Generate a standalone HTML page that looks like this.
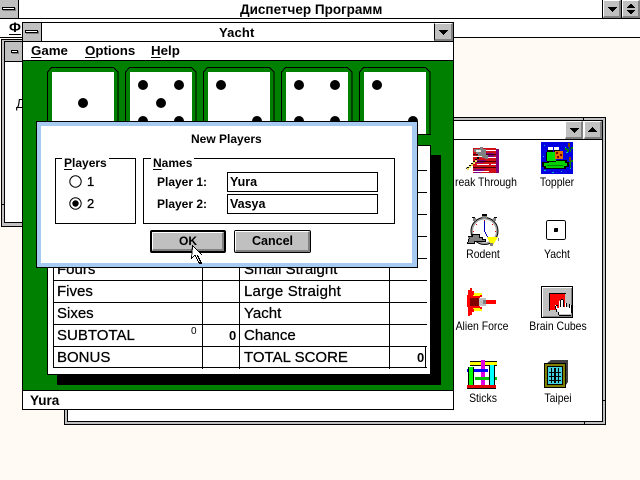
<!DOCTYPE html>
<html><head><meta charset="utf-8"><style>
html,body{margin:0;padding:0;width:640px;height:480px;overflow:hidden;background:#fffaf3}
body{position:relative;font-family:"Liberation Sans",sans-serif;color:#000}
div,span.t{position:absolute;box-sizing:border-box}
.t{white-space:nowrap;line-height:16px;height:16px;font-size:13px;font-weight:bold}
.r{font-weight:normal;font-size:15px;-webkit-text-stroke:.25px #000}
.l{font-weight:normal;font-size:12px;line-height:14px;height:14px;text-align:center;width:90px;transform:scaleX(.87)}
.k{background:#000}.w{background:#fff}
.b{background:#c0c0c0;border-top:1px solid #fff;border-left:1px solid #fff;border-right:2px solid #808080;border-bottom:2px solid #808080}
.sys{background:#c0c0c0}
.sys i{position:absolute;background:#fff;border:1px solid #000;box-sizing:border-box;height:3px;box-shadow:1px 1px 0 #808080}
svg{position:absolute;left:0;top:0}
u{text-underline-offset:2px;text-decoration-thickness:1px}
</style></head><body>

<!-- Program Manager -->
<div class="w" style="left:0;top:0;width:640px;height:38px"></div>
<div class="k" style="left:0;top:18px;width:640px;height:1px"></div>
<div class="k" style="left:0;top:37px;width:640px;height:1px"></div>
<div class="sys" style="left:0;top:0;width:19px;height:18px;border-right:1px solid #000"><i style="left:2px;top:7px;width:13px"></i></div>
<span class="t" style="left:240px;top:2px;font-size:13.5px">Диспетчер Программ</span>
<div class="b" style="left:603px;top:0;width:18px;height:18px;"></div>
<div class="b" style="left:622px;top:0;width:18px;height:18px"></div>
<div class="k" style="left:602px;top:0;width:1px;height:18px"></div>
<div class="k" style="left:621px;top:0;width:1px;height:18px"></div>
<span class="t" style="left:9px;top:19px;font-size:14px"><u>Ф</u></span>

<!-- Left group window -->
<div style="left:1px;top:39px;width:30px;height:188px;background:#c0c0c0;border:1px solid #000"></div>
<div class="k" style="left:1px;top:204px;width:4px;height:1px"></div>
<div class="w" style="left:4px;top:41px;width:26px;height:182px;border:1px solid #000"></div>
<div class="sys" style="left:5px;top:42px;width:18px;height:19px"><i style="left:6px;top:8px;width:7px"></i></div>
<div class="k" style="left:5px;top:61px;width:20px;height:1px"></div>
<span class="t" style="left:16px;top:96px;font-weight:normal;font-size:13px">Д</span>

<!-- Games group window -->
<div style="left:64px;top:117px;width:542px;height:308px;background:#c0c0c0;border:1px solid #000"></div>
<div class="w" style="left:67px;top:120px;width:536px;height:302px;border:1px solid #000"></div>
<div class="k" style="left:68px;top:139px;width:534px;height:1px"></div>
<div class="k" style="left:583px;top:117px;width:1px;height:3px"></div>
<div class="k" style="left:603px;top:400px;width:3px;height:1px"></div>
<div class="k" style="left:584px;top:421px;width:1px;height:3px"></div>
<div class="b" style="left:565px;top:121px;width:18px;height:18px"></div>
<div class="b" style="left:584px;top:121px;width:18px;height:18px"></div>

<span class="t l" style="left:455px;top:175px;width:auto;text-align:left;transform-origin:0 50%">reak Through</span>
<span class="t l" style="left:512px;top:175px">Toppler</span>
<span class="t l" style="left:438px;top:247px">Rodent</span>
<span class="t l" style="left:512px;top:247px">Yacht</span>
<span class="t l" style="left:437px;top:319px">Alien Force</span>
<span class="t l" style="left:513px;top:319px">Brain Cubes</span>
<span class="t l" style="left:438px;top:391px">Sticks</span>
<span class="t l" style="left:513px;top:391px">Taipei</span>

<svg width="640" height="480" shape-rendering="crispEdges">
<!-- small arrows -->
<path fill="#000" d="M608 7h9v1h-1v1h-1v1h-1v1h-1v1h-1v-1h-1v-1h-1v-1h-1v-1h-1zM630 4h2v1h1v1h1v1h1v1h-8v-1h1v-1h1v-1h1zM627 10h8v1h-1v1h-1v1h-1v1h-2v-1h-1v-1h-1v-1h-1zM570 128h9v1h-1v1h-1v1h-1v1h-1v1h-1v-1h-1v-1h-1v-1h-1v-1h-1zM592 127h1v1h1v1h1v1h1v1h1v1h-9v-1h1v-1h1v-1h1v-1h1z"/>
<!-- Break Through -->
<rect x="473" y="148" width="23" height="25" fill="#d01018"/>
<rect x="496" y="149" width="3" height="24" fill="#800080"/>
<path fill="#800080" d="M474 169h12l-6 4h-6zM486 153h8v4h-8zM476 160h10l-3 3h-7z"/>
<path fill="#fff" d="M486 150h10v1h-10zM473 156h12v1h-12zM488 157h8v1h-8zM477 164h12v1h-12zM491 164h5v1h-5zM473 171h16v1h-16z"/>
<path fill="#400" d="M473 154h23v1h-23zM473 161h23v1h-23zM473 167h23v1h-23z"/>
<path fill="#808080" d="M474 149h6v-2h3v2h3v6h2v4h-3v-1h-3v-2h-4v-2h-2v-2h-2z"/>
<path fill="#e8e8e8" d="M476 150h5v2h-5z"/>
<path fill="#000" d="M467 167h2v-2h2v-2h2v-2h2v-2h2v-2h2v2h-2v2h-2v2h-2v2h-2v2h-2v2h-3z"/>
<path fill="#f0e060" d="M467 168h2v-2h2v-2h2v-2h2v-2h2v2h-2v2h-2v2h-2v2h-2v2h-2z"/>
<!-- Toppler -->
<rect x="541" y="142" width="32" height="32" fill="#0000e0"/>
<path fill="#00c0c0" d="M544 145h1v1h-1zM549 150h1v1h-1zM566 152h2v1h-2zM569 158h1v1h-1zM544 170h2v1h-2zM552 172h2v1h-2zM561 171h1v1h-1zM570 168h1v1h-1zM565 147h1v1h-1zM543 156h1v1h-1zM546 166h1v1h-1z"/>
<path fill="#008000" d="M569 143h1v6h-1zM565 148h2v1h2v3h-2v-2h-2zM571 147h2v2h-2v3h-1v-3h1zM570 158h1v10h-1zM567 162h3v2h-3zM571 160h2v2h-2z"/>
<path fill="#804000" d="M568 143h2v4h-2zM569 157h2v4h-2z"/>
<path fill="#000" d="M542 162h5v-2h20v2h2v5h-3v2h-22v-2h-2z"/>
<path fill="#00d000" d="M544 163h5v-2h16v2h2v3h-3v2h-18v-2h-2z"/>
<path fill="#008000" d="M547 165h16v1h-16z"/>
<path fill="#00e000" d="M547 152h9v9h-9z"/>
<path fill="#000" d="M546 152h1v9h-1zM549 161h7v1h-7z"/>
<path fill="#fff" d="M548 147h5v3h-5zM554 147h5v3h-5z"/>
<path fill="#000" d="M547 150h6v2h-6zM554 150h6v2h-6z"/>
<path fill="#e07000" d="M555 151h8v8h-8z"/>
<path fill="#800000" d="M556 152h2v2h-2zM560 154h2v2h-2zM557 156h2v2h-2z"/>
<!-- Rodent -->
<circle cx="484.500" cy="231" r="12.500" fill="#fff" stroke="#a0a0a0" stroke-width="2" shape-rendering="auto"/>
<circle cx="484.500" cy="231" r="13.500" fill="none" stroke="#000" stroke-width="1" shape-rendering="auto"/>
<path fill="#808080" d="M482 216h5v2h-5zM473 218h3v3h-3zM493 218h3v3h-3z"/>
<path fill="#000" d="M482 214h5v2h-5zM472 217h3v1h-3zM494 217h3v1h-3z"/>
<path fill="#0000c0" d="M484 221h1v11h-1zM485 232h1v2h-1zM486 234h1v2h-1zM487 236h1v1h-1z"/>
<path fill="#e00000" d="M484 220h1v1h-1zM476 224h1v1h-1zM492 224h1v1h-1zM473 231h1v1h-1zM495 231h1v1h-1zM477 238h1v1h-1z"/>
<path fill="#000" d="M468 236h4v-2h8v3h3v2h3v3h-11v2h-8v-2h1v-3h1z"/>
<path fill="#808080" d="M469 237h4v-2h6v3h3v2h3v1h-11v2h-6v-1h1v-3h1z"/>
<path fill="#ffff00" d="M487 237h11l-5 8h-2z"/>
<path fill="#808080" d="M490 243h3v3h-3zM498 238h1v3h-1z"/>
<!-- Yacht icon -->
<rect x="546.500" y="220.500" width="19" height="19" rx="2" fill="#fff" stroke="#000"/>
<rect x="554" y="228" width="4" height="4" rx="1" fill="#000"/>
<!-- Alien Force -->
<path fill="#ff0000" d="M470 288h2v3h2v3h8v3h-5v10h5v2h-8v3h-2v3h-2v1h-2v-9h-1v-12h1v-5h2zM486 300h10v4h-10z"/>
<path fill="#ffff00" d="M474 293h8v2h-8zM473 295h7v1h-7zM473 308h7v1h-7zM474 309h8v2h-8z"/>
<rect x="468" y="296" width="12" height="12" fill="#ff0000"/>
<rect x="470" y="298" width="9" height="8" fill="#800000"/>
<path fill="#c0c0c0" d="M479 298h7v8h-7z"/>
<path fill="#808080" d="M483 300h3v4h-3z"/>
<!-- Brain Cubes -->
<rect x="541.500" y="286.500" width="31" height="31" fill="#c0c0c0" stroke="#000"/>
<path fill="#fff" d="M542 287h30v1h-30zM542 288h1v29h-1z"/>
<path fill="#808080" d="M543 316h29v1h-29zM571 288h1v29h-1z"/>
<rect x="550" y="294" width="15" height="16" fill="#ff0000"/>
<path fill="#000" d="M549 293h17v1h-17zM549 294h1v17h-1z"/>
<path fill="#fff" d="M559 300h2v-1h2v8h2v-4h2v4h2v-2h2v9h-13v-3h-2v-3h-1v-3h1v1h1v2h2v-7h1z"/>
<path fill="#000" d="M561 299h2v1h-2zM560 300h1v7h-1zM563 300h1v7h-1zM566 303h1v4h-1zM569 304h1v4h-1zM571 305h1v8h-1zM556 305h2v1h-2zM555 306h1v3h-1zM556 309h1v3h-1zM558 312h1v3h-1zM559 315h12v1h-12z"/>
<!-- Sticks -->
<rect x="467" y="385" width="29" height="3" fill="#e00000"/>
<path fill="#000" d="M467 388h29v1h-29z"/>
<rect x="470" y="362" width="27" height="3" fill="#ffff00"/>
<path fill="#000" d="M470 365h27v1h-27zM470 361h27v1h-27z"/>
<rect x="481" y="360" width="4" height="25" fill="#e000e0"/>
<rect x="467" y="369" width="21" height="3" fill="#0000ff"/>
<rect x="475" y="377" width="22" height="3" fill="#00c000"/>
<rect x="469" y="367" width="4" height="18" fill="#00ff00"/>
<path fill="#000" d="M468 367h1v18h-1zM473 367h1v18h-1z"/>
<rect x="490" y="365" width="4" height="20" fill="#00ffff"/>
<path fill="#000" d="M489 365h1v20h-1zM494 365h1v20h-1z"/>
<!-- Taipei -->
<path fill="#404040" d="M547 363l4-3h17v22l-4 6z"/>
<rect x="544" y="363" width="22" height="25" fill="#000"/>
<rect x="545" y="364" width="20" height="23" fill="#808000"/>
<rect x="547" y="366" width="16" height="19" fill="#000"/>
<rect x="548" y="367" width="14" height="17" fill="#40d0e0"/>
<path fill="#000" d="M551 368h1v15h-1zM554 368h2v15h-2zM558 368h1v15h-1zM549 372h12v1h-12zM549 376h12v1h-12zM549 380h12v1h-12z"/>
</svg>

<!-- Yacht window -->
<div class="w" style="left:22px;top:22px;width:432px;height:388px;border:1px solid #000"></div>
<div class="sys" style="left:23px;top:23px;width:18px;height:18px;"><i style="left:2px;top:7px;width:13px"></i></div>
<div class="k" style="left:41px;top:23px;width:1px;height:18px"></div>
<div class="k" style="left:23px;top:41px;width:430px;height:1px"></div>
<div class="k" style="left:23px;top:60px;width:430px;height:1px"></div>
<div class="b" style="left:434px;top:23px;width:19px;height:18px;border-left-color:#000"></div>
<svg width="640" height="480" shape-rendering="crispEdges"><path fill="#000" d="M439 30h9v1h-1v1h-1v1h-1v1h-1v1h-1v-1h-1v-1h-1v-1h-1v-1h-1z"/></svg>
<span class="t" style="left:219px;top:25px;letter-spacing:.15px">Yacht</span>
<span class="t" style="left:31px;top:43px;font-size:13.300px"><u>G</u>ame</span>
<span class="t" style="left:85px;top:43px;font-size:13.300px"><u>O</u>ptions</span>
<span class="t" style="left:151px;top:43px;font-size:13.300px"><u>H</u>elp</span>

<div style="left:23px;top:61px;width:430px;height:329px;background:#008000"></div>

<!-- dice -->
<svg width="640" height="480">
<g fill="none" stroke="#000" stroke-width="1" shape-rendering="crispEdges">
<path d="M47.500 134V72l4-4.500h62l4.500 4.500V134"/>
<path d="M125.500 134V72l4-4.500h62l4.500 4.500V134"/>
<path d="M203.500 134V72l4-4.500h62l4.500 4.500V134"/>
<path d="M281.500 134V72l4-4.500h62l4.500 4.500V134"/>
<path d="M359.500 134V72l4-4.500h62l4.500 4.500V134"/>
</g>
<g fill="#fff"><rect x="52" y="72" width="62" height="62"/><rect x="130" y="72" width="62" height="62"/><rect x="208" y="72" width="62" height="62"/><rect x="286" y="72" width="62" height="62"/><rect x="364" y="72" width="62" height="62"/></g>
<g fill="#000">
<circle cx="83" cy="103" r="5"/>
<circle cx="143" cy="85" r="5"/><circle cx="179" cy="85" r="5"/><circle cx="161" cy="103" r="5"/><circle cx="143" cy="121" r="5"/><circle cx="179" cy="121" r="5"/>
<circle cx="221" cy="85" r="5"/><circle cx="257" cy="121" r="5"/>
<circle cx="299" cy="85" r="5"/><circle cx="335" cy="85" r="5"/><circle cx="299" cy="121" r="5"/><circle cx="335" cy="121" r="5"/>
<circle cx="377" cy="85" r="5"/><circle cx="413" cy="121" r="5"/>
</g>
<path d="M47 134.500h384" stroke="#000" shape-rendering="crispEdges"/>
</svg>

<!-- scorecard -->
<div class="k" style="left:57px;top:155px;width:384px;height:230px"></div>
<div class="w" style="left:47px;top:145px;width:384px;height:230px;border:1px solid #000"></div>
<svg width="640" height="480" shape-rendering="crispEdges">
<path stroke="#000" fill="none" d="M53.500 170v198M202.500 170v199M239.500 170v199M389.500 170v199M425.500 346v22M53 170.500h374M53 192.500h374M53 214.500h374M53 236.500h374M53 258.500h374M53 280.500h374M53 302.500h374M53 324.500h374M53 346.500h374M53 367.500h374"/>
</svg>
<span class="t r" style="left:57px;top:262px">Fours</span>
<span class="t r" style="left:57px;top:284px">Fives</span>
<span class="t r" style="left:57px;top:306px">Sixes</span>
<span class="t r" style="left:57px;top:328px">SUBTOTAL</span>
<span class="t r" style="left:57px;top:350px">BONUS</span>
<span class="t r" style="left:244px;top:262px">Small Straight</span>
<span class="t r" style="left:244px;top:284px;letter-spacing:.2px">Large Straight</span>
<span class="t r" style="left:244px;top:306px">Yacht</span>
<span class="t r" style="left:244px;top:328px">Chance</span>
<span class="t r" style="left:244px;top:350px">TOTAL SCORE</span>
<span class="t" style="left:191px;top:324px;font-weight:normal;font-size:10px">0</span>
<span class="t" style="left:229px;top:328px;font-size:13px">0</span>
<span class="t" style="left:417px;top:350px;font-size:13px">0</span>

<!-- status -->
<div class="k" style="left:23px;top:390px;width:430px;height:1px"></div>
<span class="t" style="left:30px;top:393px;font-size:13.500px">Yura</span>

<!-- Dialog -->
<div style="left:36px;top:121px;width:382px;height:147px;background:#a6caf0;border:1px solid #000"></div>
<div class="w" style="left:41px;top:126px;width:371px;height:137px"></div>
<span class="t" style="left:191px;top:131px;font-size:12px">New Players</span>

<div style="left:55px;top:158px;width:81px;height:66px;border:1px solid #000"></div>
<span class="t w" style="left:62px;top:155px;padding:0 2px;font-size:12px"><u>P</u>layers</span>
<div style="left:143px;top:158px;width:252px;height:66px;border:1px solid #000"></div>
<span class="t w" style="left:151px;top:155px;padding:0 2px;font-size:12px"><u>N</u>ames</span>

<svg width="640" height="480">
<circle cx="75.500" cy="181.500" r="5.700" fill="#fff" stroke="#000"/>
<circle cx="75.500" cy="203.500" r="5.700" fill="#fff" stroke="#000"/>
<circle cx="75.500" cy="203.500" r="3.200" fill="#000"/>
</svg>
<span class="t" style="left:87px;top:174px;font-size:13px;font-weight:normal;-webkit-text-stroke:.3px #000">1</span>
<span class="t" style="left:87px;top:196px;font-size:13px;font-weight:normal;-webkit-text-stroke:.3px #000">2</span>
<span class="t" style="left:157px;top:174px;font-size:12px">Player 1:</span>
<span class="t" style="left:157px;top:196px;font-size:12px">Player 2:</span>
<div class="w" style="left:227px;top:172px;width:151px;height:20px;border:1px solid #000"></div>
<div class="w" style="left:227px;top:194px;width:151px;height:20px;border:1px solid #000"></div>
<span class="t" style="left:230px;top:174px;font-size:12.500px">Yura</span>
<span class="t" style="left:230px;top:196px;font-size:12.500px">Vasya</span>

<div class="k" style="left:150px;top:230px;width:76px;height:23px;border-radius:2px"></div>
<div style="left:152px;top:232px;width:72px;height:19px;background:#c0c0c0;border-top:1px solid #fff;border-left:1px solid #fff;border-right:2px solid #808080;border-bottom:2px solid #808080"></div>
<span class="t" style="left:179px;top:233px;font-size:12px">OK</span>
<div class="k" style="left:234px;top:230px;width:77px;height:23px;border-radius:2px"></div>
<div style="left:235px;top:231px;width:75px;height:21px;background:#c0c0c0;border-top:1px solid #fff;border-left:1px solid #fff;border-right:2px solid #808080;border-bottom:2px solid #808080"></div>
<span class="t" style="left:252px;top:233px;font-size:12.500px">Cancel</span>

<!-- cursor -->
<svg width="640" height="480" shape-rendering="crispEdges">
<path fill="#000" d="M192 245h1v1h1v1h1v1h1v1h1v1h1v1h1v1h1v1h1v1h1v1h-4v1h1v2h1v2h1v2h1v2h-3v-1h-1v-2h-1v-2h-1v-2h-1v-1h-1v1h-1v1h-1v1h-1z"/>
<path fill="#fff" d="M193 247h1v1h1v1h1v1h1v1h1v1h1v1h1v1h1v1h-4v2h1v2h1v2h1v1h-1v-1h-1v-2h-1v-2h-1v-2h-2v1h-1v1h-1z"/>
</svg>
</body></html>
